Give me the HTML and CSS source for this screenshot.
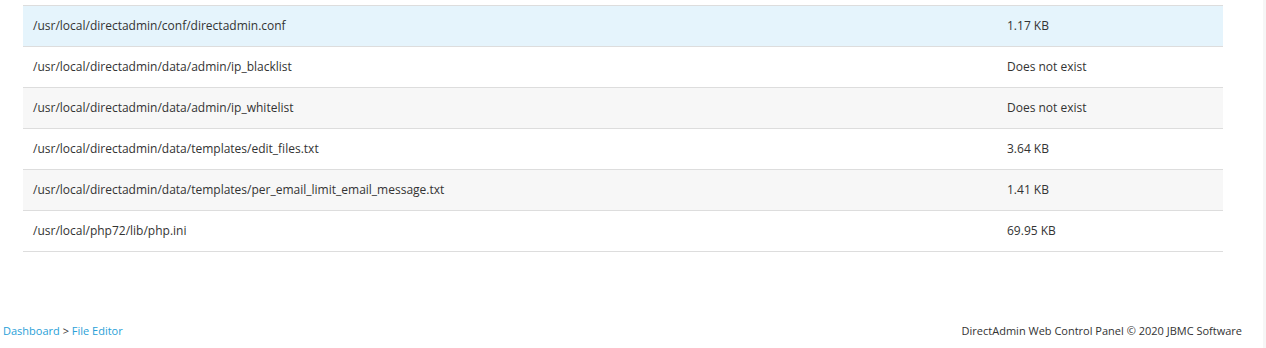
FILE: index.html
```html
<!DOCTYPE html>
<html>
<head>
<meta charset="utf-8">
<link rel="stylesheet" href="styles.css">
</head>
<body>
<div class="page">
  <main class="main">
    <div class="table">
      <div class="row hl"><div class="cell name">/usr/local/directadmin/conf/directadmin.conf</div><div class="cell size">1.17 KB</div></div>
      <div class="row"><div class="cell name">/usr/local/directadmin/data/admin/ip_blacklist</div><div class="cell size">Does not exist</div></div>
      <div class="row alt"><div class="cell name">/usr/local/directadmin/data/admin/ip_whitelist</div><div class="cell size">Does not exist</div></div>
      <div class="row"><div class="cell name">/usr/local/directadmin/data/templates/edit_files.txt</div><div class="cell size">3.64 KB</div></div>
      <div class="row alt"><div class="cell name">/usr/local/directadmin/data/templates/per_email_limit_email_message.txt</div><div class="cell size">1.41 KB</div></div>
      <div class="row"><div class="cell name">/usr/local/php72/lib/php.ini</div><div class="cell size">69.95 KB</div></div>
    </div>
    <footer class="footer">
      <div class="crumbs"><a class="link">Dashboard</a> &gt; <a class="link">File Editor</a></div>
      <div class="copy">DirectAdmin Web Control Panel © 2020 JBMC Software</div>
    </footer>
  </main>
  <div class="strip"></div>
</div>
</body>
</html>
```
FILE: styles.css
```css
html, body {
  margin: 0;
  padding: 0;
  background: #fff;
}
body {
  font-family: "Open Sans", "Liberation Sans", sans-serif;
  font-size: 12px;
  color: #333;
}
.page {
  display: flex;
  height: 348px;
}
.main {
  flex: 1;
  display: flex;
  flex-direction: column;
}
.strip {
  width: 3px;
  background: #f6f6f6;
}
.table {
  margin: 5px 0 0 23px;
  width: 1200px;
  border-top: 1px solid #ddd;
}
.row {
  display: grid;
  grid-template-columns: 974px 226px;
  height: 40px;
  border-bottom: 1px solid #ddd;
  background: #fff;
}
.row.hl { background: #e5f4fc; }
.row.alt { background: #f7f7f7; }
.cell {
  padding: 0 10px;
  display: flex;
  align-items: center;
  line-height: 18px;
}
.footer {
  margin-top: 70px;
  display: flex;
  justify-content: space-between;
  padding: 0 21px 0 3px;
  font-size: 11px;
  line-height: 18px;
}
.link {
  color: #2a9fd8;
  text-decoration: none;
  cursor: pointer;
}
.copy { color: #333; }
```
